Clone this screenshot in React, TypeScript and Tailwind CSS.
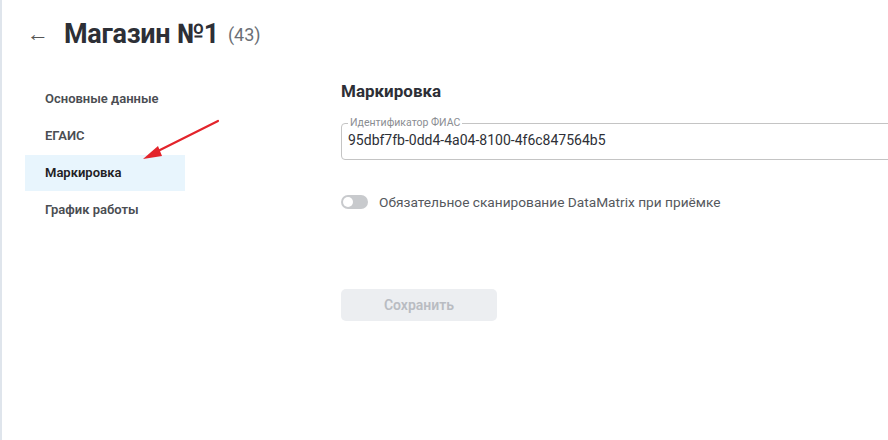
const menu = ["Основные данные", "ЕГАИС", "Маркировка", "График работы"];

export default function App() {
  return (
    <div
      className="relative h-[440px] w-[888px] overflow-hidden border-l-2 border-[#dfe5ec] bg-white text-[#2b2b2b]"
      style={{ fontFamily: "Roboto, 'Noto Sans', sans-serif" }}
    >
      <div className="flex items-center pl-[25px] pt-[16px]">
        <span className="w-[37px] text-[22px] leading-none text-[#555]">←</span>
        <h1 className="text-[27px] font-bold leading-[36px] tracking-[-0.3px] text-[#2d2f36]">Магазин №1</h1>
        <span className="ml-[9px] mt-[1px] text-[18px] text-[#6b6f76]">(43)</span>
      </div>

      <div className="mt-[29px] flex">
        <nav className="ml-[23px] flex w-[160px] shrink-0 flex-col">
          {menu.map((m) => (
            <div
              key={m}
              className={
                "mb-[1px] flex h-[36px] items-center whitespace-nowrap pl-[20px] text-[13px] font-semibold " +
                (m === "Маркировка" ? "bg-[#e8f5fd] text-[#1f2124]" : "text-[#4a4d52]")
              }
            >
              {m}
            </div>
          ))}
        </nav>

        <main className="ml-[156px] flex shrink-0 flex-col">
          <h2 className="text-[17px] font-bold leading-[20px] text-[#2d2f36]">Маркировка</h2>

          <fieldset className="mt-[16px] h-[43px] w-[580px] rounded-[4px] border border-[#c4c4c4] px-[6px]">
            <legend className="px-[2px] text-[10.5px] leading-[12px] text-[#8a8d92]">Идентификатор ФИАС</legend>
            <div className="mt-[1px] text-[14px] leading-[20px] text-[#2d2f36]">95dbf7fb-0dd4-4a04-8100-4f6c847564b5</div>
          </fieldset>

          <label className="mt-[32px] flex h-[20px] items-center">
            <span className="relative h-[14px] w-[27px] rounded-full bg-[#c8cacd]">
              <span className="absolute left-[2px] top-[2px] h-[10px] w-[10px] rounded-full bg-white" />
            </span>
            <span className="ml-[11px] text-[13.7px] text-[#55585d]">Обязательное сканирование DataMatrix при приёмке</span>
          </label>

          <button className="mt-[77px] h-[32px] w-[156px] rounded-[5px] bg-[#eceef1] text-[14px] font-semibold text-[#b9bcc2]">
            Сохранить
          </button>
        </main>
      </div>

      <svg className="absolute left-0 top-0" width="888" height="440">
        <line x1="216" y1="121" x2="152" y2="153" stroke="#e3242b" strokeWidth="2.2" strokeLinecap="round" />
        <polygon points="141,159 156,146 160,156" fill="#e3242b" />
      </svg>
    </div>
  );
}
